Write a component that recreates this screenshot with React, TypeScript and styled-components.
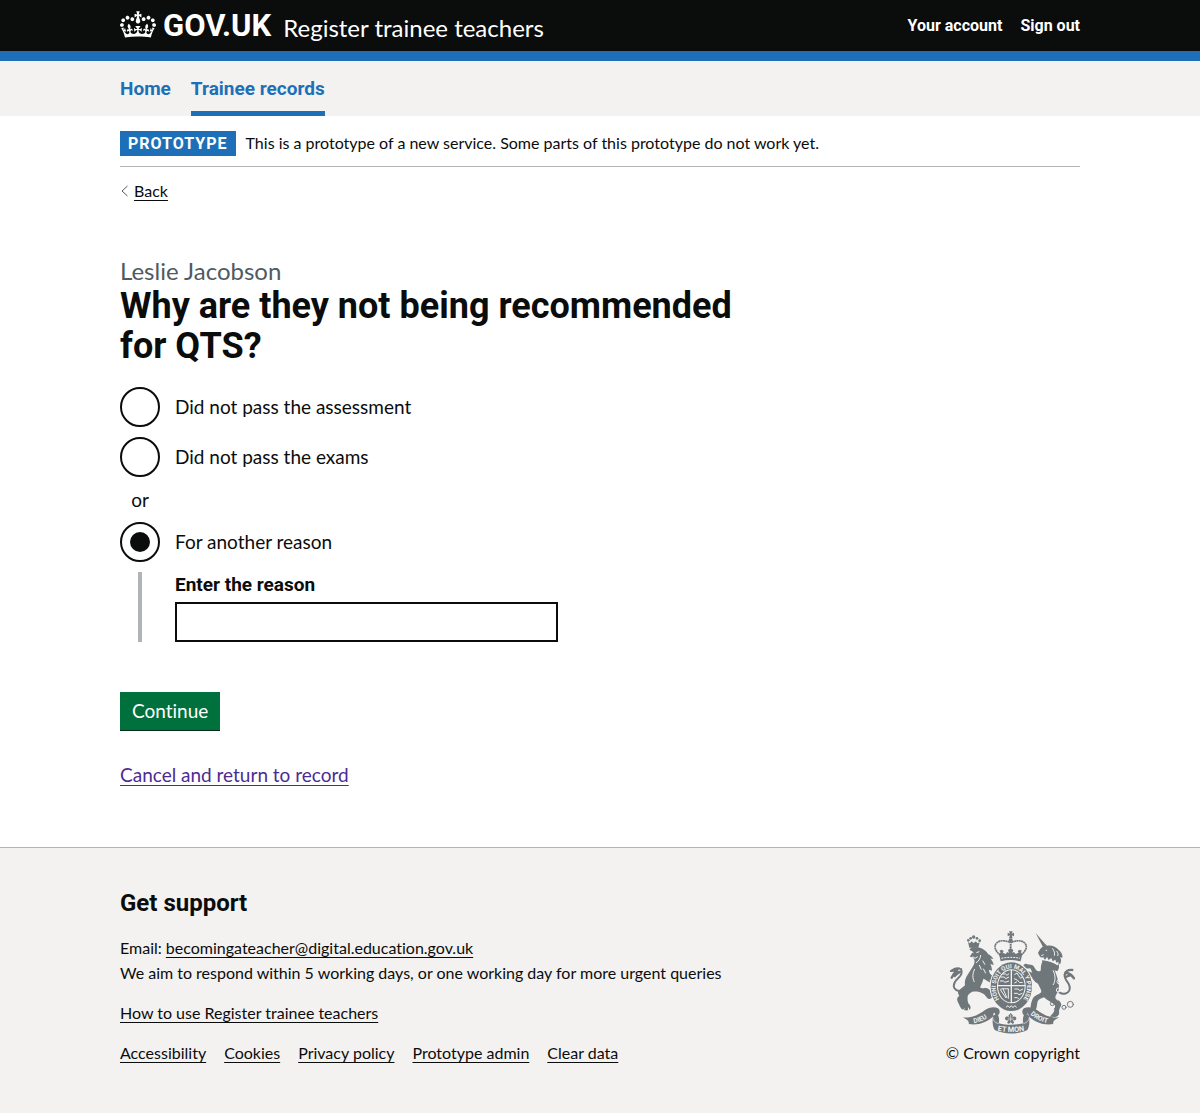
import React, { useState } from "react";
import styled, { createGlobalStyle, css } from "styled-components";

const color = {
  ink: "#0b0c0c",
  blue: "#1d70b8",
  grey: "#f3f2f1",
  border: "#b1b4b6",
  secondary: "#505a5f",
  green: "#00703c",
  greenDark: "#002d18",
  visited: "#4c2c92",
  crest: "#6f777b",
};

const regular = 'Lato, Roboto, "Liberation Sans", sans-serif';
const strong = 'Roboto, "Liberation Sans", sans-serif';

const GlobalStyle = createGlobalStyle`
  *, *::before, *::after { box-sizing: border-box; }
  html { background: ${color.grey}; }
  body {
    margin: 0;
    background: #fff;
    color: ${color.ink};
    font-family: ${regular};
    font-size: 19px;
    font-variant-ligatures: none;
    line-height: 25px;
  }
  h1, h2, p, ul { margin: 0; padding: 0; }
  ul { list-style: none; }
`;

const Container = styled.div`
  max-width: 1020px;
  margin: 0 auto;
  padding: 0 30px;
`;

const underline = css`
  text-decoration: underline;
  text-decoration-thickness: 1px;
  text-underline-offset: 3px;
`;

const Header = styled.header`
  background: ${color.ink};
  border-bottom: 10px solid ${color.blue};
`;

const HeaderRow = styled(Container)`
  display: flex;
  flex-wrap: wrap;
  justify-content: space-between;
  align-items: flex-start;
  padding-top: 11px;
  padding-bottom: 8px;
`;

const Brand = styled.div`
  display: flex;
  align-items: flex-end;
  gap: 12px;
`;

const Logo = styled.a`
  display: flex;
  align-items: flex-start;
  gap: 7px;
  color: #fff;
  font: 700 31px/30px ${strong};
  text-decoration: none;
  padding-bottom: 2px;
`;

const ServiceName = styled.a`
  color: #fff;
  font-size: 24px;
  line-height: 30px;
  text-decoration: none;
`;

const AccountLinks = styled.ul`
  display: flex;
  gap: 18px;
  padding-top: 5px;
`;

const AccountLink = styled.a`
  display: block;
  color: #fff;
  font: 700 16px/20px ${strong};
  text-decoration: none;
`;

const PrimaryNav = styled.nav`
  background: ${color.grey};
`;

const PrimaryList = styled.ul`
  display: flex;
  gap: 20px;
`;

const PrimaryLink = styled.a<{ $current?: boolean }>`
  display: block;
  padding: 15px 0 10px;
  border-bottom: 5px solid ${(p) => (p.$current ? color.blue : "transparent")};
  color: ${color.blue};
  font: 700 19px/25px ${strong};
  text-decoration: none;
`;

const PhaseBanner = styled.div`
  display: flex;
  align-items: flex-start;
  gap: 10px;
  padding: 15px 0 10px;
  border-bottom: 1px solid ${color.border};
  font-size: 16px;
  line-height: 24px;
`;

const Tag = styled.strong`
  padding: 0 8px;
  background: ${color.blue};
  color: #fff;
  font: 700 16px/25px ${strong};
  letter-spacing: 1px;
  text-transform: uppercase;
`;

const BackLink = styled.a`
  display: inline-flex;
  align-items: center;
  gap: 6px;
  margin-top: 14px;
  color: ${color.ink};
  font-size: 16px;
  line-height: 20px;
  text-decoration: none;
  vertical-align: top;

  span { ${underline} }
  svg { margin-left: 1px; }
`;

const Main = styled.main`
  max-width: 640px;
  padding: 55px 0 60px;
`;

const Caption = styled.span`
  display: block;
  color: ${color.secondary};
  font: 400 24px/30px ${regular};
`;

const Heading = styled.h1`
  font: 700 36px/40px ${strong};
`;

const Fieldset = styled.fieldset`
  min-width: 0;
  margin: 0 0 50px;
  padding: 0;
  border: 0;
`;

const Legend = styled.legend`
  margin-bottom: 21px;
  padding: 0;
`;

const RadioRow = styled.div`
  display: flex;
  gap: 15px;
  margin-bottom: 10px;
`;

const RadioLabel = styled.label`
  padding: 7px 0 8px;
`;

const Radio = styled.input`
  appearance: none;
  flex: none;
  width: 40px;
  height: 40px;
  margin: 0;
  padding: 8px;
  border: 2px solid ${color.ink};
  border-radius: 50%;
  background: transparent content-box;

  &:checked { background-color: ${color.ink}; }
  &:focus-visible { outline: 3px solid #fd0; }
`;

const Divider = styled.div`
  width: 40px;
  margin-bottom: 10px;
  text-align: center;
`;

const Conditional = styled.div`
  margin-left: 18px;
  padding-left: 33px;
  border-left: 4px solid ${color.border};
`;

const FieldLabel = styled.label`
  display: block;
  margin-bottom: 5px;
  font: 700 19px/25px ${strong};
`;

const TextInput = styled.input`
  display: block;
  width: 100%;
  max-width: 383px;
  height: 40px;
  padding: 5px;
  border: 2px solid ${color.ink};
  border-radius: 0;
  background: #fff;
  color: ${color.ink};
  font: 400 19px/25px ${regular};
`;

const Button = styled.button`
  display: block;
  margin: 0 0 32px;
  padding: 6px 12px 7px;
  border: 0;
  border-radius: 0;
  background: ${color.green};
  box-shadow: 0 1px 0 ${color.greenDark};
  color: #fff;
  font: 400 19px/25px ${regular};
  font-variant-ligatures: none;
`;

const CancelLink = styled.a`
  color: ${color.visited};
  ${underline}
`;

const Footer = styled.footer`
  padding: 40px 0 48px;
  border-top: 1px solid ${color.border};
  background: ${color.grey};
  font-size: 16px;
  line-height: 25px;
`;

const FooterRow = styled(Container)`
  display: flex;
  flex-wrap: wrap;
  align-items: flex-end;
  justify-content: space-between;
  gap: 30px;
`;

const FooterHeading = styled.h2`
  margin-bottom: 17px;
  font: 700 24px/30px ${strong};
`;

const FooterText = styled.p`
  margin-bottom: 15px;
`;

const FooterLink = styled.a`
  color: ${color.ink};
  ${underline}
`;

const FooterLinks = styled.ul`
  display: flex;
  flex-wrap: wrap;
  gap: 0 18px;
`;

const Copyright = styled.a`
  display: flex;
  flex-direction: column;
  align-items: center;
  gap: 6px;
  color: ${color.ink};
  text-decoration: none;
`;

const CrestText = styled.text`
  font-family: ${strong};
  font-weight: 700;
  fill: ${color.grey};
`;

const Crown = () => (
  <svg width="36" height="27" viewBox="0 0 132 97" fill="currentColor" aria-hidden="true">
    <path
      fillRule="evenodd"
      d="M25 30.2c3.5 1.5 7.7-.2 9.1-3.7 1.5-3.6-.2-7.8-3.9-9.2-3.6-1.4-7.6.3-9.1 3.9-1.4 3.5.3 7.5 3.9 9zM9 39.5c3.6 1.5 7.8-.2 9.2-3.7 1.5-3.6-.2-7.8-3.9-9.1-3.6-1.5-7.6.2-9.1 3.8-1.4 3.5.3 7.5 3.8 9zM4.4 57.2c3.5 1.5 7.7-.2 9.1-3.8 1.5-3.6-.2-7.7-3.9-9.1-3.5-1.5-7.6.3-9.1 3.8-1.4 3.5.3 7.6 3.9 9.1zm38.3-21.4c3.5 1.5 7.7-.2 9.1-3.8 1.5-3.6-.2-7.7-3.9-9.1-3.6-1.5-7.6.3-9.1 3.8-1.3 3.6.4 7.7 3.9 9.1zm64.4-5.6c-3.6 1.5-7.8-.2-9.1-3.7-1.5-3.6.2-7.8 3.8-9.2 3.6-1.4 7.7.3 9.2 3.9 1.3 3.5-.4 7.5-3.9 9zm15.9 9.3c-3.6 1.5-7.7-.2-9.1-3.7-1.5-3.6.2-7.8 3.7-9.1 3.6-1.5 7.7.2 9.2 3.8 1.5 3.5-.3 7.5-3.8 9zm4.7 17.7c-3.6 1.5-7.8-.2-9.2-3.8-1.5-3.6.2-7.7 3.9-9.1 3.6-1.5 7.7.3 9.2 3.8 1.3 3.5-.4 7.6-3.9 9.1zM89.3 35.8c-3.6 1.5-7.8-.2-9.2-3.8-1.4-3.6.2-7.7 3.9-9.1 3.6-1.5 7.7.3 9.2 3.8 1.4 3.6-.3 7.7-3.9 9.1zM69.7 17.7l8.9 4.7V9.3l-8.9 2.8c-.2-.3-.5-.6-.9-.9L72.4 0H59.6l3.5 11.2c-.3.3-.6.5-.9.9l-8.8-2.8v13.1l8.8-4.7c.3.3.6.7.9.9l-5 15.4v.1c-.2.8-.4 1.6-.4 2.4 0 4.1 3.1 7.5 7 8.1h.2c.3 0 .7.1 1 .1.4 0 .7 0 1-.1h.2c4-.6 7.1-4.1 7.1-8.1 0-.8-.1-1.7-.4-2.4V34l-5.1-15.4c.4-.2.7-.6 1-.9zM66 92.8c16.9 0 32.8 1.1 47.1 3.2 4-16.9 8.9-26.7 14-33.5l-9.6-3.4c1 4.9 1.1 7.2 0 10.2-1.5-1.4-3-4.3-4.2-8.7L108.6 76c2.8-2 5-3.2 7.5-3.3-4.4 9.4-10 11.9-13.6 11.2-4.3-.8-6.3-4.6-5.6-7.9 1-4.7 5.7-5.9 8-.5 4.3-8.7-3-11.4-7.6-8.8 7.1-7.2 7.9-13.5 2.1-21.1-8 6.1-8.1 12.3-4.5 20.8-4.7-5.4-12.1-2.5-9.5 6.2 3.4-5.2 7.9-2 7.2 3.1-.6 4.3-6.4 7.8-13.5 7.2-10.3-.9-10.9-8-11.2-13.8 2.5-.5 7.1 1.8 11 7.3L80.2 60c-4.1 4.4-8 5.3-12.3 5.4 1.4-4.4 8-11.6 8-11.6H55.5s6.4 7.2 7.9 11.6c-4.2-.1-8-1-12.3-5.4l1.4 16.4c3.9-5.5 8.5-7.7 10.9-7.3-.3 5.8-.9 12.8-11.1 13.8-7.2.6-12.9-2.9-13.5-7.2-.7-5 3.8-8.3 7.1-3.1 2.7-8.7-4.6-11.6-9.4-6.2 3.7-8.5 3.6-14.7-4.6-20.8-5.8 7.6-5 13.9 2.2 21.1-4.7-2.6-11.9.1-7.7 8.8 2.3-5.5 7.1-4.2 8.1.5.7 3.3-1.3 7.1-5.7 7.9-3.5.7-9-1.8-13.5-11.2 2.5.1 4.7 1.3 7.5 3.3l-4.7-15.4c-1.2 4.4-2.7 7.2-4.3 8.7-1.1-3-.9-5.3 0-10.2l-9.5 3.4c5 6.9 9.9 16.7 14 33.5 14.8-2.1 30.8-3.2 47.7-3.2z"
    />
  </svg>
);

const Crest = () => (
  <svg width="125" height="103" viewBox="36 32 375 309" fill={color.crest} aria-hidden="true">
    {/* lion's crown */}
    <circle cx="107" cy="50" r="5" />
    <circle cx="91" cy="60" r="4" />
    <circle cx="98" cy="54" r="4" />
    <circle cx="117" cy="54" r="4" />
    <circle cx="125" cy="61" r="4" />
    <path d="M90 65l6 4 4-6 7 5 7-5 4 6 7-3-4 16H94z" />
    {/* lion */}
    <path d="M92 84c9-4 24-4 34-2 10 3 19 10 25 20 6 3 12 8 15 14-4 0-7-1-9-2 5 7 9 13 10 20-4-1-7-2-10-4 3 7 5 14 5 21l-9-3c0 8 3 12 8 17 8 4 12 12 13 18-3 5-9 7-15 4-8-2-14-8-23-12-2 10-6 18-10 26 4 4 9 3 14 2 10-1 16 6 20 12 6 5 6 12 1 18-6 5-12 3-15-2-4-6-8-10-15-13-8-4-17-5-28-4-7 4-13 8-14 14-1 9 0 15 2 21 6 6 8 12 6 17-5 5-18 6-26 0-6-7-7-14-12-22-3-8-2-14 5-17-3-5-5-8-3-14 5-7 13-12 20-18-2-10 1-22 8-32l15-24c7-9 8-20 0-29-4 1-7 0-9-2 6-6 8-11 8-16-5-1-9-3-8-6l9-5z" />
    <g stroke={color.crest} fill="none" strokeLinecap="round">
      <path strokeWidth="6" d="M84 208c-14 9-30 4-35-5-6-13 3-22 12-30 10-9 12-18 8-27" />
      <path strokeWidth="7" d="M64 145c-9-3-14 0-23 6l19-1c-8 4-13 9-19 22M66 154c-6 4-12 8-16 13" />
    </g>
    <g stroke={color.grey} fill="none" strokeWidth="3">
      <path d="M97 94l9 3m9 0l9-3M104 109l7 5 8-5M128 104c-1 12-7 20-14 23M110 146c-7 15-7 27-1 39M134 121l7 12M136 145l7 14M124 134l6 14M79 265l-7 10M91 262l2 13M155 180l9 6M155 238l8 8" />
    </g>
    {/* unicorn */}
    <path d="M293 38l31 36-9 6z" />
    <path d="M300 98c4-8 9-16 16-20l4-8 7 6c14-2 28 3 36 14 7 6 12 14 10 22-3 0-5-1-7-2 5 8 4 15 0 22l-6-4c5 9 4 17-2 25l-8-3c7 17 12 34 13 50 1 15-12 23-11 33 8 5 17 11 18 20-2 7-7 13-7 20 2 9-2 16-11 17l-17-1 8-8c8-11 11-19 7-28-8-7-22-12-32-22-7 3-16 5-19 12-3 9-1 16-5 24l-14 14-13 2c2-8 7-12 11-17-1-12 4-30 10-37 9-6 18-8 22-14 0-9-6-16-10-25-9-5-15-12-19-21-9-2-18-3-20-9 0-5 3-9 8-9l8 4 6 2-6-13c-6 1-15 1-20-2l-1-7c3-5 8-6 12-3 7 2 13 1 18 4l8 13c5 5 10 5 14 2l1-14c2-11 7-16 8-27-5 3-9 2-12-2z" />
    <path fill={color.grey} d="M312 122l3-11 6 7 6-8 5 9 8-6 4 10 8-5 3 9 7-3-4 13c-14-9-30-13-46-15z" />
    <g stroke={color.crest} fill="none" strokeLinecap="round">
      <path strokeWidth="4" d="M314 122c15 2 31 7 44 15" />
      <path strokeWidth="6" d="M364 216c14 9 26 2 30-6 5-11-2-21-9-30-6-9-7-17-2-25" />
      <path strokeWidth="7" d="M381 162c2-8 10-14 22-13M387 158c8 2 16 8 21 16M383 170l12-5" />
      <circle strokeWidth="3" cx="397" cy="252" r="9" />
      <circle strokeWidth="3" cx="378" cy="261" r="6" />
      <circle strokeWidth="3" cx="355" cy="267" r="6" />
      <circle strokeWidth="3" cx="343" cy="250" r="6" />
    </g>
    <g stroke={color.grey} fill="none" strokeWidth="3">
      <circle cx="325" cy="90" r="1" />
      <path d="M343 84c6 8 8 15 6 22M356 92c5 7 5 10 3 15M317 103l-7 3M345 150c8 15 8 32 0 44" />
      <circle cx="363" cy="184" r="6" />
      <circle cx="361" cy="209" r="6" />
      <circle cx="360" cy="234" r="5" />
    </g>
    {/* royal crown */}
    <path d="M213 33h11l-3 7 7-3v11l-7-3 3 9h-11l3-9-7 3V37l7 3z" />
    <circle cx="218" cy="60" r="6" />
    <g stroke={color.crest} fill="none">
      <path strokeWidth="5" strokeDasharray="6 1" d="M187 104c-18-14-20-29-10-37 10-9 30-6 40 0M249 104c18-14 20-29 10-37-10-9-30-6-40 0" />
      <path strokeWidth="6" strokeDasharray="5 2" d="M218 64v34" />
    </g>
    <path d="M183 101l5-5-4-5 7-3 6 4-3 5 9 4 5-6 5 3-3-9 8-6 8 6-3 9 5-3 5 6 9-4-3-5 6-4 7 3-4 5 5 5-5 22c-20-5-40-5-60 0z" />
    <path stroke={color.grey} strokeWidth="3" fill="none" strokeDasharray="6 3" d="M190 114c19-4 37-4 56 0" />
    {/* garter and shield */}
    <ellipse cx="220" cy="199" rx="65" ry="76" fill={color.grey} />
    <ellipse cx="220" cy="199" rx="62" ry="73" />
    <ellipse cx="220" cy="198" rx="43" ry="51" fill={color.grey} />
    <ellipse cx="220" cy="198" rx="40" ry="48" />
    <path id="garter-line" fill="none" d="M190 243A47 56 0 1 1 250 243" />
    <CrestText fontSize="18">
      <textPath href="#garter-line" startOffset="50%" textAnchor="middle">HONI SOIT QUI MAL Y PENSE</textPath>
    </CrestText>
    <g stroke={color.grey} fill="none" strokeWidth="3">
      <path strokeWidth="4" d="M220 149v98M178 196h84" />
      <path d="M187 170h12l4 5 10-5M186 182h10l5 4 12-4M193 161h10l4 4 6-5" />
      <path d="M229 163l8-5 5 8 6 8 5-4M228 175l10 4 7 8 9-1M229 188l8-4" />
      <path d="M187 208l17 25M195 205l12 28M187 207c9-4 16 0 24-2v30" />
      <path d="M229 206h12l4 5 10-5M228 219h10l5 4 10-4M229 232h9l4 4" />
      <path d="M204 261l6-5 5 6 5-6 5 6 5-6 6 5" />
    </g>
    {/* motto scroll */}
    <path d="M74 291c26 3 48-7 66-21 12-8 28-12 40-6 8 6 6 18-2 22l-8-4c2-4 0-6-3-4l-3 12c-18 16-44 26-72 21 3-7-4-13-18-20z" />
    <path d="M364 291c-26 3-48-7-66-21-12-8-28-12-40-6-8 6-6 18 2 22l8-4c-2-4 0-6 3-4l3 12c18 16 44 26 72 21-3-7 4-13 18-20z" />
    <path d="M178 280l-14 6c0 12-2 30 6 43 29 14 69 14 98 0 8-13 6-31 6-43l-14-6c-5 8-7 18-4 29-24 6-50 6-74 0 3-11 1-21-4-29z" />
    <path fill="none" stroke={color.grey} strokeWidth="2" d="M164 290c1 10 6 17 18 20M274 290c-1 10-6 17-18 20" />
    <path id="motto-left" fill="none" d="M107 309c20-3 40-13 60-30" />
    <path id="motto-centre" fill="none" d="M166 329c35 8 71 8 106 0" />
    <path id="motto-right" fill="none" d="M274 280c16 15 38 27 66 30" />
    <CrestText fontSize="20">
      <textPath href="#motto-left" startOffset="1">DIEU</textPath>
    </CrestText>
    <CrestText fontSize="22">
      <textPath href="#motto-centre" startOffset="50%" textAnchor="middle">ET MON</textPath>
    </CrestText>
    <CrestText fontSize="20">
      <textPath href="#motto-right" startOffset="4">DROIT</textPath>
    </CrestText>
    {/* plant badge */}
    <path d="M218 278l7 8-3 7c5-7 12-5 13 1 0 6-6 8-11 5l3 5c3 3 0 7-4 6l-5-4-5 4c-4 1-7-3-4-6l3-5c-5 3-11 1-11-5 1-6 8-8 13-1l-3-7z" />
    <path fill="none" stroke={color.grey} strokeWidth="2" d="M218 283v20M209 296h18" />
  </svg>
);

const BackChevron = () => (
  <svg width="7" height="12" viewBox="0 0 7 12" fill="none" stroke={color.secondary} aria-hidden="true">
    <path d="M6.500 1L1 6l5.500 5" />
  </svg>
);

const reasons = [
  { id: "assessment", label: "Did not pass the assessment" },
  { id: "exams", label: "Did not pass the exams" },
  { id: "other", label: "For another reason", dividerBefore: true },
];

const footerLinks = ["Accessibility", "Cookies", "Privacy policy", "Prototype admin", "Clear data"];

export default function App() {
  const [reason, setReason] = useState("other");
  const [detail, setDetail] = useState("");

  return (
    <>
      <GlobalStyle />
      <Header>
        <HeaderRow>
          <Brand>
            <Logo href="#">
              <Crown />
              GOV.UK
            </Logo>
            <ServiceName href="#">Register trainee teachers</ServiceName>
          </Brand>
          <AccountLinks>
            <li><AccountLink href="#">Your account</AccountLink></li>
            <li><AccountLink href="#">Sign out</AccountLink></li>
          </AccountLinks>
        </HeaderRow>
      </Header>

      <PrimaryNav aria-label="Primary">
        <Container>
          <PrimaryList>
            <li><PrimaryLink href="#">Home</PrimaryLink></li>
            <li><PrimaryLink href="#" $current aria-current="page">Trainee records</PrimaryLink></li>
          </PrimaryList>
        </Container>
      </PrimaryNav>

      <Container>
        <PhaseBanner>
          <Tag>Prototype</Tag>
          <span>This is a prototype of a new service. Some parts of this prototype do not work yet.</span>
        </PhaseBanner>
        <BackLink href="#">
          <BackChevron />
          <span>Back</span>
        </BackLink>

        <Main>
          <form onSubmit={(e) => e.preventDefault()}>
            <Fieldset>
              <Legend>
                <Caption>Leslie Jacobson</Caption>
                <Heading>Why are they not being recommended for QTS?</Heading>
              </Legend>
              {reasons.map((r) => (
                <React.Fragment key={r.id}>
                  {r.dividerBefore && <Divider>or</Divider>}
                  <RadioRow>
                    <Radio
                      type="radio"
                      name="reason"
                      id={r.id}
                      value={r.id}
                      checked={reason === r.id}
                      onChange={() => setReason(r.id)}
                    />
                    <RadioLabel htmlFor={r.id}>{r.label}</RadioLabel>
                  </RadioRow>
                </React.Fragment>
              ))}
              {reason === "other" && (
                <Conditional>
                  <FieldLabel htmlFor="detail">Enter the reason</FieldLabel>
                  <TextInput id="detail" type="text" value={detail} onChange={(e) => setDetail(e.target.value)} />
                </Conditional>
              )}
            </Fieldset>
            <Button type="submit">Continue</Button>
            <CancelLink href="#">Cancel and return to record</CancelLink>
          </form>
        </Main>
      </Container>

      <Footer>
        <FooterRow>
          <div>
            <FooterHeading>Get support</FooterHeading>
            <FooterText>
              Email: <FooterLink href="mailto:becomingateacher@digital.education.gov.uk">becomingateacher@digital.education.gov.uk</FooterLink>
              <br />
              We aim to respond within 5 working days, or one working day for more urgent queries
            </FooterText>
            <FooterText>
              <FooterLink href="#">How to use Register trainee teachers</FooterLink>
            </FooterText>
            <FooterLinks>
              {footerLinks.map((text) => (
                <li key={text}><FooterLink href="#">{text}</FooterLink></li>
              ))}
            </FooterLinks>
          </div>
          <Copyright href="#">
            <Crest />
            © Crown copyright
          </Copyright>
        </FooterRow>
      </Footer>
    </>
  );
}
